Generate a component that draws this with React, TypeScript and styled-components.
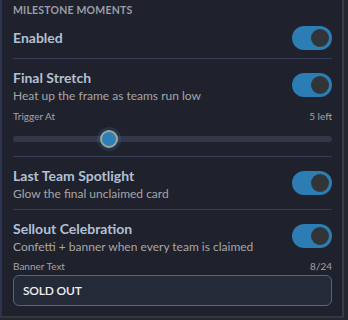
import React from 'react';
import styled, { createGlobalStyle } from 'styled-components';

const GlobalStyle = createGlobalStyle`
  html, body {
    margin: 0;
    padding: 0;
    background: #25272e;
  }
  body {
    font-family: "Lato", "Noto Sans", sans-serif;
  }
`;

const Panel = styled.section`
  box-sizing: border-box;
  width: 344px;
  height: 318px;
  background: #1f212c;
  border-left: 2px solid #2c3452;
  border-right: 2px solid #393b43;
  border-bottom: 2px solid #343640;
  padding: 3px 10px 0 11px;
  overflow: hidden;
`;

const Heading = styled.h2`
  margin: 0 0 9px 0;
  font-size: 10.5px;
  font-weight: 700;
  letter-spacing: 0.2px;
  text-transform: uppercase;
  color: #9b9ea7;
  line-height: 14px;
`;

const Block = styled.div<{ $top?: number; $bottom?: number; $last?: boolean }>`
  padding: ${(p) => p.$top ?? 10}px 0 ${(p) => p.$bottom ?? 8}px 0;
  border-bottom: ${(p) => (p.$last ? 'none' : '1px solid #363d55')};
`;

const Row = styled.div<{ $single?: boolean }>`
  display: flex;
  align-items: ${(p) => (p.$single ? 'center' : 'flex-start')};
  justify-content: space-between;
  gap: 12px;
`;

const Texts = styled.div`
  display: flex;
  flex-direction: column;
`;

const Title = styled.div`
  font-size: 14px;
  font-weight: 700;
  color: #b2c0d4;
  line-height: 18px;
`;

const Sub = styled.div`
  font-size: 12px;
  color: #a6a6a8;
  line-height: 18px;
`;

const Switch = styled.button<{ $on: boolean; $offset: number }>`
  flex: none;
  position: relative;
  width: 40px;
  height: 24px;
  margin-top: ${(p) => p.$offset}px;
  border: none;
  padding: 0;
  border-radius: 12px;
  background: ${(p) => (p.$on ? '#2b7db3' : '#3a3f50')};
  cursor: pointer;
  &::after {
    content: '';
    position: absolute;
    top: 3px;
    left: ${(p) => (p.$on ? '19px' : '3px')};
    width: 18px;
    height: 18px;
    border-radius: 50%;
    background: #333438;
  }
`;

const FieldHead = styled.div<{ $gap: number }>`
  display: flex;
  justify-content: space-between;
  font-size: 10px;
  color: #a3a3a6;
  line-height: 13px;
  margin-top: ${(p) => p.$gap}px;
`;

const Track = styled.div`
  position: relative;
  height: 6px;
  border-radius: 3px;
  background: #323848;
  margin-top: 13px;
`;

const Thumb = styled.div`
  position: absolute;
  top: 50%;
  width: 14px;
  height: 14px;
  margin: -9px 0 0 -9px;
  border-radius: 50%;
  background: #2b80b8;
  border: 2px solid #a9a291;
  box-shadow: 0 0 0 3px rgba(43, 125, 179, 0.22);
`;

const Input = styled.input`
  box-sizing: border-box;
  display: block;
  width: 100%;
  height: 31px;
  margin-top: 2px;
  padding: 0 9px;
  border: 1px solid #56628a;
  border-radius: 6px;
  background: #252a39;
  color: #f0f0f0;
  font-family: "Lato", "Noto Sans", sans-serif;
  font-size: 12px;
  font-weight: 600;
  letter-spacing: -0.2px;
  outline: none;
`;

type ToggleRowProps = {
  title: string;
  sub?: string;
};

function ToggleRow({ title, sub }: ToggleRowProps) {
  return (
    <Row $single={!sub}>
      <Texts>
        <Title>{title}</Title>
        {sub && <Sub>{sub}</Sub>}
      </Texts>
      <Switch $on $offset={sub ? 4 : 0} aria-label={title} />
    </Row>
  );
}

export default function App() {
  const value = 5;
  const pct = 30;
  return (
    <>
      <GlobalStyle />
      <Panel>
        <Heading>Milestone Moments</Heading>
        <Block $top={0} $bottom={8}>
          <ToggleRow title="Enabled" />
        </Block>
        <Block $bottom={14}>
          <ToggleRow title="Final Stretch" sub="Heat up the frame as teams run low" />
          <FieldHead $gap={5}>
            <span>Trigger At</span>
            <span>{value} left</span>
          </FieldHead>
          <Track>
            <Thumb style={{ left: `${pct}%` }} />
          </Track>
        </Block>
        <Block $bottom={6}>
          <ToggleRow title="Last Team Spotlight" sub="Glow the final unclaimed card" />
        </Block>
        <Block $last>
          <ToggleRow title="Sellout Celebration" sub="Confetti + banner when every team is claimed" />
          <FieldHead $gap={4}>
            <span>Banner Text</span>
            <span>8/24</span>
          </FieldHead>
          <Input defaultValue="SOLD OUT" />
        </Block>
      </Panel>
    </>
  );
}
